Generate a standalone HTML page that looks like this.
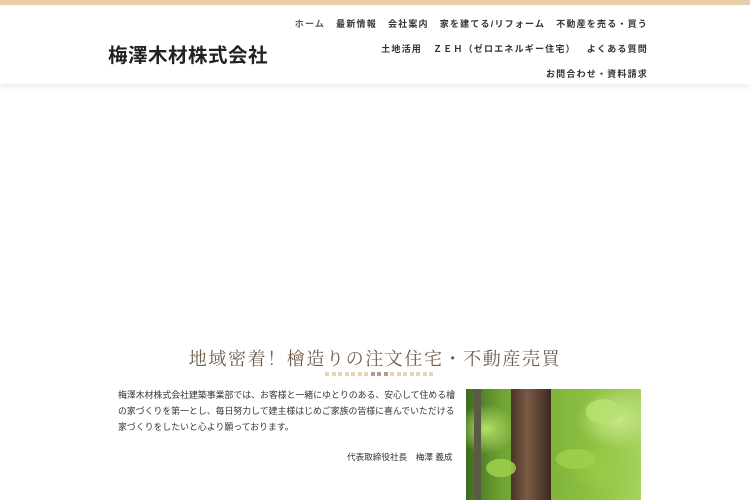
<!DOCTYPE html>
<html><head><meta charset="utf-8"><style>
*{margin:0;padding:0;box-sizing:border-box}
body{width:750px;height:500px;overflow:hidden;background:#fff;font-family:"Liberation Sans","Noto Sans CJK JP",sans-serif;position:relative}
.top{position:absolute;left:0;top:0;width:750px;height:5px;background:#e8cfa9}
.hdr{position:absolute;left:0;top:5px;width:750px;height:79px;background:#fff;box-shadow:0 3px 6px rgba(0,0,0,0.08)}
.logo{position:absolute;left:108px;top:34px;font-size:19.5px;font-weight:bold;color:#222;letter-spacing:0.5px}
.nav{position:absolute;right:102px;font-size:9px;font-weight:bold;color:#333;letter-spacing:1.2px;white-space:nowrap}
.nav span{margin-left:11px}
.title{position:absolute;left:0;width:750px;top:345px;text-align:center;font-family:"Noto Serif CJK SC","Liberation Serif",serif;font-size:18px;color:#6e5d4d;letter-spacing:1.6px}
.dots{position:absolute;left:325px;top:372px;display:flex;gap:2.5px}
.dots i{display:block;width:4px;height:4px;background:#e6d4b8}
.dots i.d{background:#b99a88}
.txt{position:absolute;left:118px;top:387px;width:342px;font-size:8.9px;line-height:16px;color:#333}
.sig{position:absolute;left:347px;top:451px;font-size:8.6px;color:#333}
.img{position:absolute;left:466px;top:389px;width:175px;height:111px;overflow:hidden;background:
radial-gradient(ellipse 30px 25px at 20px 40px,#b7e06a,transparent),
radial-gradient(ellipse 40px 30px at 150px 30px,#c8e88a,transparent),
radial-gradient(ellipse 40px 25px at 140px 80px,#9acb4a,transparent),
linear-gradient(90deg,#3d6a1e,#6fa334 20%,#8cbf3f 70%,#a6d35e)}
.trunk{position:absolute;left:45px;top:0;width:40px;height:111px;background:linear-gradient(90deg,#4a3326,#7a5a46 40%,#5b4232 70%,#3b2a20)}
.trunk2{position:absolute;left:8px;top:0;width:7px;height:111px;background:#5b5a45}
.leaf{position:absolute;border-radius:50%;background:#9dd14a;opacity:.85}
</style></head><body>
<div class="top"></div>
<div class="hdr">
<div class="logo">梅澤木材株式会社</div>
<div class="nav" style="top:12px"><span style="color:#6b5a4a">ホーム</span><span>最新情報</span><span>会社案内</span><span>家を建てる/リフォーム</span><span>不動産を売る・買う</span></div>
<div class="nav" style="top:37px"><span>土地活用</span><span>ＺＥＨ（ゼロエネルギー住宅）</span><span>よくある質問</span></div>
<div class="nav" style="top:62px"><span>お問合わせ・資料請求</span></div>
</div>
<div class="title">地域密着！檜造りの注文住宅・不動産売買</div>
<div class="dots"><i></i><i></i><i></i><i></i><i></i><i></i><i></i><i class="d"></i><i class="d"></i><i class="d"></i><i></i><i></i><i></i><i></i><i></i><i></i><i></i></div>
<div class="txt">梅澤木材株式会社建築事業部では、お客様と一緒にゆとりのある、安心して住める檜の家づくりを第一とし、毎日努力して建主様はじめご家族の皆様に喜んでいただける家づくりをしたいと心より願っております。</div>
<div class="sig">代表取締役社長　梅澤 義成</div>
<div class="img"><div class="trunk2"></div><div class="trunk"></div>
<div class="leaf" style="left:90px;top:60px;width:40px;height:20px"></div>
<div class="leaf" style="left:20px;top:70px;width:30px;height:18px"></div>
<div class="leaf" style="left:120px;top:10px;width:35px;height:25px;background:#b9e070"></div>
</div>
</body></html>
